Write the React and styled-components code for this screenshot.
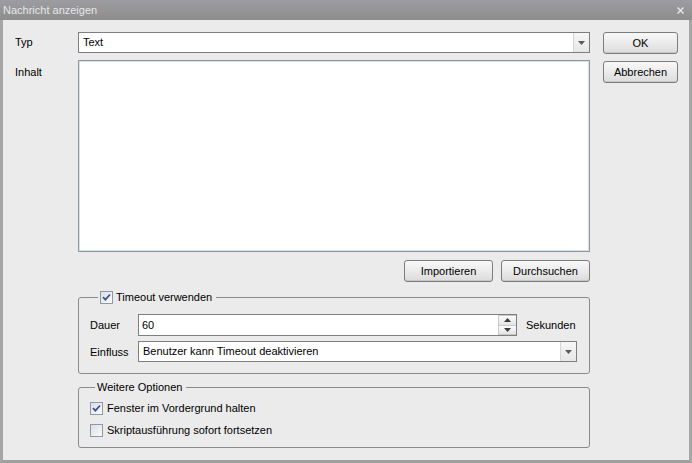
import styled, { createGlobalStyle } from "styled-components";

const GlobalStyle = createGlobalStyle`
  html, body {
    margin: 0;
    padding: 0;
    background: #ebebeb;
  }
  * {
    box-sizing: border-box;
  }
`;

const Window = styled.div`
  width: 692px;
  height: 463px;
  display: flex;
  flex-direction: column;
  font-family: "Liberation Sans", Arial, sans-serif;
  font-size: 11px;
  color: #000;
`;

const TitleBar = styled.div`
  height: 20px;
  display: flex;
  align-items: center;
  justify-content: space-between;
  padding: 0 8px 0 3px;
  background: linear-gradient(#9d9da1, #8d8d8d);
  color: #e6e6e6;
`;

const Frame = styled.div`
  flex: 1;
  display: flex;
  padding: 12px 8px 0 12px;
  background: #ebebeb;
  border-left: 3px solid #a6a6a6;
  border-right: 3px solid #a6a6a6;
  border-bottom: 3px solid #a0a0a0;
`;

const Main = styled.div`
  width: 575px;
  display: grid;
  grid-template-columns: 63px 512px;
  align-content: start;
`;

const Side = styled.div`
  width: 75px;
  margin-left: 13px;
  display: flex;
  flex-direction: column;
  gap: 7px;
`;

const Label = styled.div`
  padding-top: ${(p) => p.$top || 0}px;
  line-height: ${(p) => (p.$center ? "21px" : "14px")};
`;

const Combo = styled.div`
  height: ${(p) => p.$height || 21}px;
  width: ${(p) => (p.$width ? p.$width + "px" : "100%")};
  display: flex;
  background: #fff;
  border: 1px solid #7e7e7e;
  margin-top: ${(p) => p.$mt || 0}px;
`;

const ComboText = styled.div`
  flex: 1;
  padding-left: 4px;
  line-height: 19px;
`;

const ComboArrow = styled.div`
  width: 16px;
  display: flex;
  align-items: center;
  justify-content: center;
  background: linear-gradient(#f7f7f7, #e6e6e6);
  border-left: 1px solid #d4d4d4;
`;

const Down = ({ color = "#5a5a5a" }) => (
  <svg width="7" height="4" viewBox="0 0 7 4">
    <path d="M0 0h7L3.5 4z" fill={color} />
  </svg>
);

const Up = ({ color = "#3a3a3a" }) => (
  <svg width="7" height="4" viewBox="0 0 7 4">
    <path d="M0 4h7L3.5 0z" fill={color} />
  </svg>
);

const TextArea = styled.textarea`
  height: 192px;
  margin: 7px 0 0;
  resize: none;
  border: 1px solid #8d97a4;
  box-shadow: inset 0 0 0 1px #d9e0e8;
  background: #fff;
  outline: none;
`;

const Button = styled.button`
  height: 22px;
  width: ${(p) => p.$width || 75}px;
  padding: 0;
  font: inherit;
  color: #000;
  border: 1px solid #7c7c7c;
  border-radius: 3px;
  background: linear-gradient(#f8f8f8 0%, #ececec 45%, #dcdcdc 100%);
  box-shadow: inset 0 -1px 0 #c8c8c8;
`;

const ButtonRow = styled.div`
  grid-column: 2;
  display: flex;
  justify-content: flex-end;
  gap: 8px;
  margin-top: 8px;
`;

const Group = styled.fieldset`
  grid-column: 2;
  margin: ${(p) => p.$mt || 0}px 0 0;
  padding: ${(p) => p.$pt}px 12px ${(p) => p.$pb}px 11px;
  border: 1px solid #8a8a8a;
  border-radius: 3px;
  min-width: 0;
`;

const Legend = styled.legend`
  display: flex;
  align-items: center;
  gap: 3px;
  height: 14px;
  margin-left: ${(p) => p.$ml}px;
  padding: 0 4px 0 2px;
  line-height: 14px;
`;

const FieldRow = styled.div`
  display: flex;
  align-items: center;
  margin-top: ${(p) => p.$mt || 0}px;
`;

const FieldLabel = styled.div`
  width: 48px;
`;

const Spin = styled.div`
  width: 379px;
  height: 22px;
  display: flex;
  background: #fff;
  border: 1px solid #7e7e7e;
`;

const SpinText = styled.div`
  flex: 1;
  padding-left: 3px;
  line-height: 20px;
`;

const SpinButtons = styled.div`
  width: 18px;
  display: flex;
  flex-direction: column;
`;

const SpinButton = styled.div`
  flex: 1;
  display: flex;
  align-items: center;
  justify-content: center;
  background: linear-gradient(#fbfbfb, #e4e4e4);
  border: 1px solid #c9c9c9;
  border-right: none;
  &:last-child {
    border-top: none;
  }
`;

const Unit = styled.div`
  margin-left: 9px;
`;

const CheckRow = styled.label`
  display: flex;
  align-items: center;
  gap: 4px;
  height: 16px;
  margin-top: ${(p) => p.$mt || 0}px;
`;

const Box = styled.span`
  width: 13px;
  height: 13px;
  display: flex;
  align-items: center;
  justify-content: center;
  border: 1px solid #8b99aa;
  background: linear-gradient(135deg, #dcdee2, #fbfbfb);
`;

function Check({ checked }) {
  return (
    <Box>
      {checked && (
        <svg width="9" height="9" viewBox="0 0 9 9">
          <path
            d="M1 4.2l2.4 2.4L8 1.5"
            fill="none"
            stroke="#3d5390"
            strokeWidth="1.8"
          />
        </svg>
      )}
    </Box>
  );
}

export default function App() {
  return (
    <Window>
      <GlobalStyle />
      <TitleBar>
        <span>Nachricht anzeigen</span>
        <svg width="7" height="7" viewBox="0 0 7 7">
          <path d="M0.5 0.5l6 6M6.5 0.5l-6 6" stroke="#e4e6ec" strokeWidth="1.5" />
        </svg>
      </TitleBar>
      <Frame>
        <Main>
          <Label $center>Typ</Label>
          <Combo>
            <ComboText>Text</ComboText>
            <ComboArrow>
              <Down />
            </ComboArrow>
          </Combo>
          <Label $top={12}>Inhalt</Label>
          <TextArea />
          <ButtonRow>
            <Button $width={89}>Importieren</Button>
            <Button $width={89}>Durchsuchen</Button>
          </ButtonRow>
          <Group $mt={8} $pt={10} $pb={11}>
            <Legend $ml={8}>
              <Check checked />
              <span>Timeout verwenden</span>
            </Legend>
            <FieldRow>
              <FieldLabel>Dauer</FieldLabel>
              <Spin>
                <SpinText>60</SpinText>
                <SpinButtons>
                  <SpinButton>
                    <Up />
                  </SpinButton>
                  <SpinButton>
                    <Down color="#3a3a3a" />
                  </SpinButton>
                </SpinButtons>
              </Spin>
              <Unit>Sekunden</Unit>
            </FieldRow>
            <FieldRow $mt={5}>
              <FieldLabel>Einfluss</FieldLabel>
              <Combo $width={439}>
                <ComboText>Benutzer kann Timeout deaktivieren</ComboText>
                <ComboArrow>
                  <Down />
                </ComboArrow>
              </Combo>
            </FieldRow>
          </Group>
          <Group $mt={6} $pt={6} $pb={9}>
            <Legend $ml={5}>Weitere Optionen</Legend>
            <CheckRow>
              <Check checked />
              Fenster im Vordergrund halten
            </CheckRow>
            <CheckRow $mt={6}>
              <Check />
              Skriptausführung sofort fortsetzen
            </CheckRow>
          </Group>
        </Main>
        <Side>
          <Button>OK</Button>
          <Button>Abbrechen</Button>
        </Side>
      </Frame>
    </Window>
  );
}
